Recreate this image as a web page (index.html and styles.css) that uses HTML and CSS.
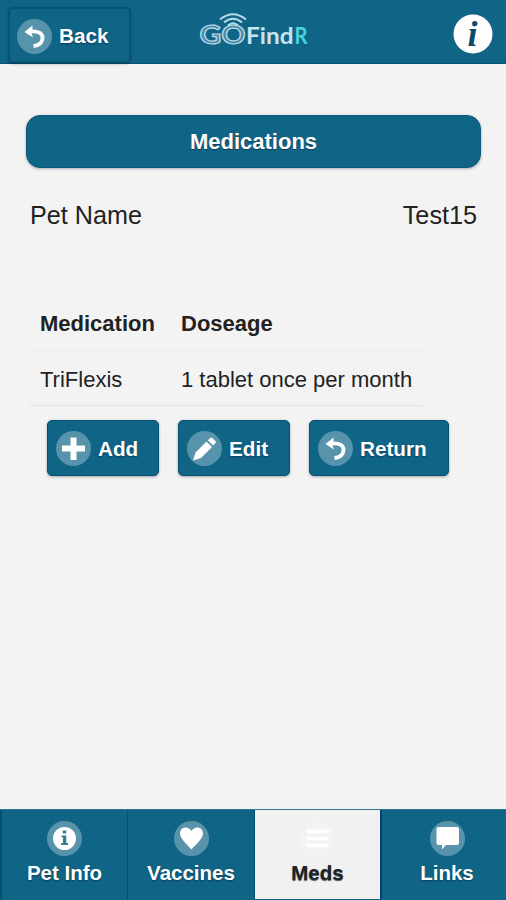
FILE: index.html
```html
<!DOCTYPE html>
<html lang="en">
<head>
<meta charset="UTF-8">
<meta name="viewport" content="width=device-width, initial-scale=1.0">
<title>GOFindR - Medications</title>
<link rel="stylesheet" href="styles.css">
</head>
<body>

<header class="header">
    <button class="btn backBtn">
        <svg class="icon" viewBox="0 0 35 35"><circle class="disc" cx="17.5" cy="17.5" r="17.5"/><path class="line" d="M13 12.5C22 11.5 26 15 25.500 19.500C25 24 21 26.500 16.500 27"/><path class="solid" d="M7.500 13L15.500 6.500V10L14.500 14.500L16 18.500Z"/></svg>
        Back
    </button>
    <svg class="logo" viewBox="0 0 112 40">
        <text class="logoGo" x="0.500" y="33" textLength="46" lengthAdjust="spacingAndGlyphs">GO</text>
        <text class="logoFind" x="47" y="32.500" textLength="47.500" lengthAdjust="spacingAndGlyphs">Find</text>
        <text class="logoR" x="95.500" y="32.500" textLength="13" lengthAdjust="spacingAndGlyphs">R</text>
        <g class="waves">
            <path d="M21 8.500Q34 -2 47 8.500"/>
            <path d="M25 11.500Q34 4 43 11.500"/>
            <path d="M29 14.500Q34 10 39 14.500"/>
        </g>
    </svg>
    <svg class="infoBtn" viewBox="0 0 40 40"><circle cx="20" cy="20" r="19.500"/><text x="19.500" y="32" text-anchor="middle">i</text></svg>
</header>

<main class="content">
    <h1 class="title">Medications</h1>
    <div class="petRow">
        <span>Pet Name</span>
        <span>Test15</span>
    </div>
    <table class="meds">
        <tr><th>Medication</th><th>Doseage</th></tr>
        <tr><td>TriFlexis</td><td>1 tablet once per month</td></tr>
    </table>
    <div class="actions">
        <button class="btn">
            <svg class="icon" viewBox="0 0 35 35"><circle class="disc" cx="17.5" cy="17.5" r="17.5"/><path class="solid" d="M14.500 6.500H20.500V14.500H29V20.500H20.500V29H14.500V20.500H6V14.500H14.500Z"/></svg>
            Add
        </button>
        <button class="btn">
            <svg class="icon" viewBox="0 0 35 35"><circle class="disc" cx="17.5" cy="17.5" r="17.5"/><path class="solid" d="M6 29.500L8.500 21.500L19.500 10.500L25 16L14 27ZM20.800 9.300L23.500 6.700Q24.500 6 25.500 7L28.500 10Q29.300 11 28.500 12L26.200 14.600Z"/></svg>
            Edit
        </button>
        <button class="btn returnBtn">
            <svg class="icon" viewBox="0 0 35 35"><circle class="disc" cx="17.5" cy="17.5" r="17.5"/><path class="line" d="M13 12.500C22 11.500 26 15 25.500 19.500C25 24 21 26.500 16.500 27"/><path class="solid" d="M7.500 13L15.500 6.500V10L14.500 14.500L16 18.500Z"/></svg>
            Return
        </button>
    </div>
</main>

<nav class="tabs">
    <a class="tab">
        <svg class="icon" viewBox="0 0 35 35"><circle class="disc" cx="17.5" cy="17.5" r="17.5"/><circle class="solid" cx="17.500" cy="17.500" r="11.500"/><path class="mark" d="M15.700 9.500H19.300V12.500H15.700ZM14.500 14.500H19.300V22H21V24H14.200V22H16V16.300H14.500Z"/></svg>
        Pet Info
    </a>
    <a class="tab">
        <svg class="icon" viewBox="0 0 35 35"><circle class="disc" cx="17.5" cy="17.5" r="17.5"/><path class="solid" d="M17.500 28.500C14 24 6 18 6 12.500C6 5.500 14.500 4.500 17.500 10C20.500 4.500 29 5.500 29 12.500C29 18 21 24 17.500 28.500Z"/></svg>
        Vaccines
    </a>
    <a class="tab active">
        <svg class="icon" viewBox="0 0 35 35"><circle class="disc" cx="17.5" cy="17.5" r="17.5"/><path class="bars" d="M7.500 10.500H27.500M7.500 17.500H27.500M7.500 24.500H27.500"/></svg>
        Meds
    </a>
    <a class="tab">
        <svg class="icon" viewBox="0 0 35 35"><circle class="disc" cx="17.5" cy="17.5" r="17.5"/><path class="solid" d="M8.500 6H27Q29 6 29 8V22Q29 24 27 24H16L12 28.500V24H8.500Q6.500 24 6.500 22V8Q6.500 6 8.500 6Z"/></svg>
        Links
    </a>
</nav>

</body>
</html>
```

FILE: styles.css
```css
* {
    box-sizing: border-box;
}
body {
    display: flex;
    flex-direction: column;
    height: 900px;
    margin: 0;
    overflow: hidden;
    background-color: #f3f3f3;
    color: #222;
    font-family: "Liberation Sans", Arial, sans-serif;
}
.header {
    display: flex;
    align-items: flex-start;
    height: 64px;
    padding: 7px 13px 0 8px;
    background-color: #106587;
    border-bottom: 1px solid #075078;
}
.btn {
    display: flex;
    align-items: center;
    gap: 7px;
    width: 112px;
    height: 56px;
    padding: 2px 0 0 8px;
    border: 1px solid #07516f;
    border-radius: 5px;
    background-color: #106587;
    box-shadow: 0 1px 3px rgba(0, 0, 0, 0.3);
    color: #fff;
    font-family: inherit;
    font-size: 20.7px;
    font-weight: bold;
    text-shadow: 0 1px 2px rgba(0, 20, 40, 0.5);
}
.backBtn {
    width: 123px;
    border: 2px solid #0b5372;
    padding-left: 7px;
}
.icon {
    width: 35px;
    height: 35px;
    flex: none;
}
.disc {
    fill: #5793ab;
}
.solid {
    fill: #fff;
}
.line {
    fill: none;
    stroke: #fff;
    stroke-width: 3.8;
}
.mark {
    fill: #397c98;
}
.bars {
    stroke: #fff;
    stroke-width: 3.5;
    stroke-linecap: round;
}
.logo {
    width: 112px;
    height: 40px;
    margin: 4px 0 0 68px;
}
.logo text {
    font-family: Lato, sans-serif;
    font-size: 23px;
    font-weight: bold;
}
.logo .logoGo {
    fill: #4b8ca6;
    stroke: #b9dce8;
    stroke-width: 1.2;
    font-size: 27px;
}
.logoFind {
    fill: #c5e5f1;
}
.logoR {
    fill: #45d4dc;
}
.waves {
    fill: none;
    stroke: #b9dce8;
    stroke-width: 2;
}
.infoBtn {
    width: 40px;
    height: 40px;
    margin: 7px 0 0 auto;
    fill: #fff;
}
.infoBtn text {
    fill: #084a6d;
    font: italic bold 36px "Liberation Serif", serif;
}
.content {
    flex: 1;
    padding: 51px 25px 0 26px;
}
.title {
    height: 53px;
    margin: 0;
    border: 1px solid #0a587c;
    border-radius: 14px;
    background-color: #106587;
    box-shadow: 0 1px 3px rgba(0, 0, 60, 0.3);
    color: #fff;
    font-size: 22px;
    line-height: 52px;
    text-align: center;
    text-shadow: 0 1px 1px rgba(0, 20, 40, 0.5);
}
.petRow {
    display: flex;
    justify-content: space-between;
    margin-top: 32px;
    padding: 0 4px;
    font-size: 25.2px;
    line-height: 30px;
}
.meds {
    width: 394px;
    margin: 65px 0 0 3px;
    border-collapse: collapse;
    font-size: 22px;
    text-align: left;
}
.meds th, .meds td {
    height: 55px;
    padding: 4px 0 0 11px;
    border-bottom: 1px solid #e4e4e4;
}
.meds th:first-child {
    width: 141px;
}
.meds tr:first-child th {
    border-bottom-color: #ececec;
}
.actions {
    display: flex;
    gap: 19px;
    margin: 14px 0 0 21px;
}
.returnBtn {
    width: 140px;
}
.tabs {
    display: grid;
    grid-template-columns: 128px 127px 127px 1fr;
    height: 91px;
    border-top: 1px solid #2f7592;
}
.tab {
    display: flex;
    flex-direction: column;
    align-items: center;
    padding-top: 11px;
    border-right: 1px solid #07506f;
    background-color: #106587;
    color: #fff;
    font-size: 20.5px;
    font-weight: bold;
    line-height: 34px;
    text-shadow: 0 1px 2px rgba(0, 20, 40, 0.5);
}
.tab:first-child {
    border-left: 2px solid #07506f;
}
.tab:last-child {
    border-right: none;
    padding-left: 6px;
}
.tab.active {
    border-right: 2px solid #073f77;
    border-bottom: 1px solid #106587;
    background-color: #f1f1f1;
    color: #222;
    text-shadow: 0 1px 1px #456;
}
.active .disc {
    fill: #f3f3f3;
}
```
